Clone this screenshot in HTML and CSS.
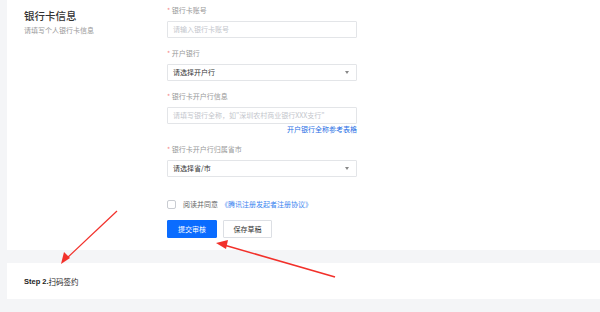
FILE: index.html
```html
<!DOCTYPE html>
<html lang="zh">
<head>
  <meta charset="UTF-8">
  <title>银行卡信息</title>
  <link rel="stylesheet" href="styles.css">
</head>
<body>
  <div class="page">
    <section class="card bank">
      <div class="intro">
        <h2>银行卡信息</h2>
        <p>请填写个人银行卡信息</p>
      </div>
      <form class="form">
        <div class="field">
          <label><span class="req">*</span> 银行卡账号</label>
          <div class="input placeholder">请输入银行卡账号</div>
        </div>
        <div class="field">
          <label><span class="req">*</span> 开户银行</label>
          <div class="input select">请选择开户行<span class="caret"></span></div>
        </div>
        <div class="field">
          <label><span class="req">*</span> 银行卡开户行信息</label>
          <div class="input placeholder">请填写银行全称，如"深圳农村商业银行XXX支行"</div>
          <a class="ref" href="#">开户银行全称参考表格</a>
        </div>
        <div class="field">
          <label><span class="req">*</span> 银行卡开户行归属省市</label>
          <div class="input select">请选择省/市<span class="caret"></span></div>
        </div>
        <div class="agree">
          <span class="box"></span>
          <span>阅读并同意</span>
          <a href="#">《腾讯注册发起者注册协议》</a>
        </div>
        <div class="actions">
          <button type="button" class="btn primary">提交审核</button>
          <button type="button" class="btn">保存草稿</button>
        </div>
      </form>
    </section>

    <section class="card step">
      <strong>Step 2.</strong>扫码签约
    </section>

    <!-- annotation arrows -->
    <svg class="arrows" width="600" height="312" viewBox="0 0 600 312">
      <line x1="117" y1="211" x2="66" y2="259" stroke="#f2302a" stroke-width="1.2"/>
      <polygon points="61,264 64,252 70,258" fill="#f2302a"/>
      <line x1="335" y1="277" x2="224" y2="245" stroke="#f2302a" stroke-width="1.6"/>
      <polygon points="216,243 228,240 226,249" fill="#f2302a"/>
    </svg>
  </div>
</body>
</html>
```

FILE: styles.css
```css
* { box-sizing: border-box; }
body {
  margin: 0;
  background: #f4f5f7;
  font-family: "Noto Sans CJK SC", "Noto Sans", sans-serif;
  color: #333;
}
.page { position: relative; width: 600px; height: 312px; padding: 0 0 0 7px; overflow: hidden; }
.card { background: #fff; }

/* bank info card */
.bank { display: flex; padding: 5px 0 12px 17px; }
.intro { width: 143px; }
.intro h2 { margin: 3px 0 0; font-size: 10.5px; line-height: 16px; font-weight: 500; color: #333; }
.intro p { margin: 1px 0 0; font-size: 7px; line-height: 10px; color: #999; }

.form { width: 190px; }
.field { margin-bottom: 10px; }
.field label { display: block; font-size: 7px; line-height: 10px; margin-bottom: 6px; color: #999; }
.req { color: #f58a8a; }
.input {
  height: 17px; border: 1px solid #e3e5e8; border-radius: 1px;
  padding: 0 5px; font-size: 7px; line-height: 15px; color: #333;
  white-space: nowrap; overflow: hidden;
}
.placeholder { color: #c3c6cc; }
.select { display: flex; justify-content: space-between; align-items: center; }
.caret {
  width: 0; height: 0; margin-right: 2px;
  border-left: 2.5px solid transparent; border-right: 2.5px solid transparent;
  border-top: 3px solid #888;
}
.ref { display: block; text-align: right; font-size: 7px; line-height: 10px; color: #1f6fe5; text-decoration: none; }

.agree { display: flex; align-items: center; gap: 3px; margin-top: 22px; font-size: 7px; line-height: 10px; color: #666; }
.agree a { color: #3a84f0; text-decoration: none; }
.box { width: 9px; height: 9px; border: 1px solid #c9ccd2; border-radius: 2px; margin-right: 4px; }

.actions { display: flex; gap: 6px; margin-top: 11px; }
.btn {
  height: 18px; width: 49px; padding: 0; border: 1px solid #dcdfe4;
  background: #fff; color: #333; font-size: 7px; font-family: inherit; border-radius: 1px;
}
.btn.primary { background: #0a6cff; border-color: #0a6cff; color: #fff; width: 50px; }

/* step 2 */
.step { margin-top: 13px; height: 36px; padding-left: 17px; display: flex; align-items: center; font-size: 7.5px; color: #222; }
.step strong { font-family: "Liberation Sans", sans-serif; font-weight: 700; }

.arrows { position: absolute; left: 0; top: 0; pointer-events: none; }
```
